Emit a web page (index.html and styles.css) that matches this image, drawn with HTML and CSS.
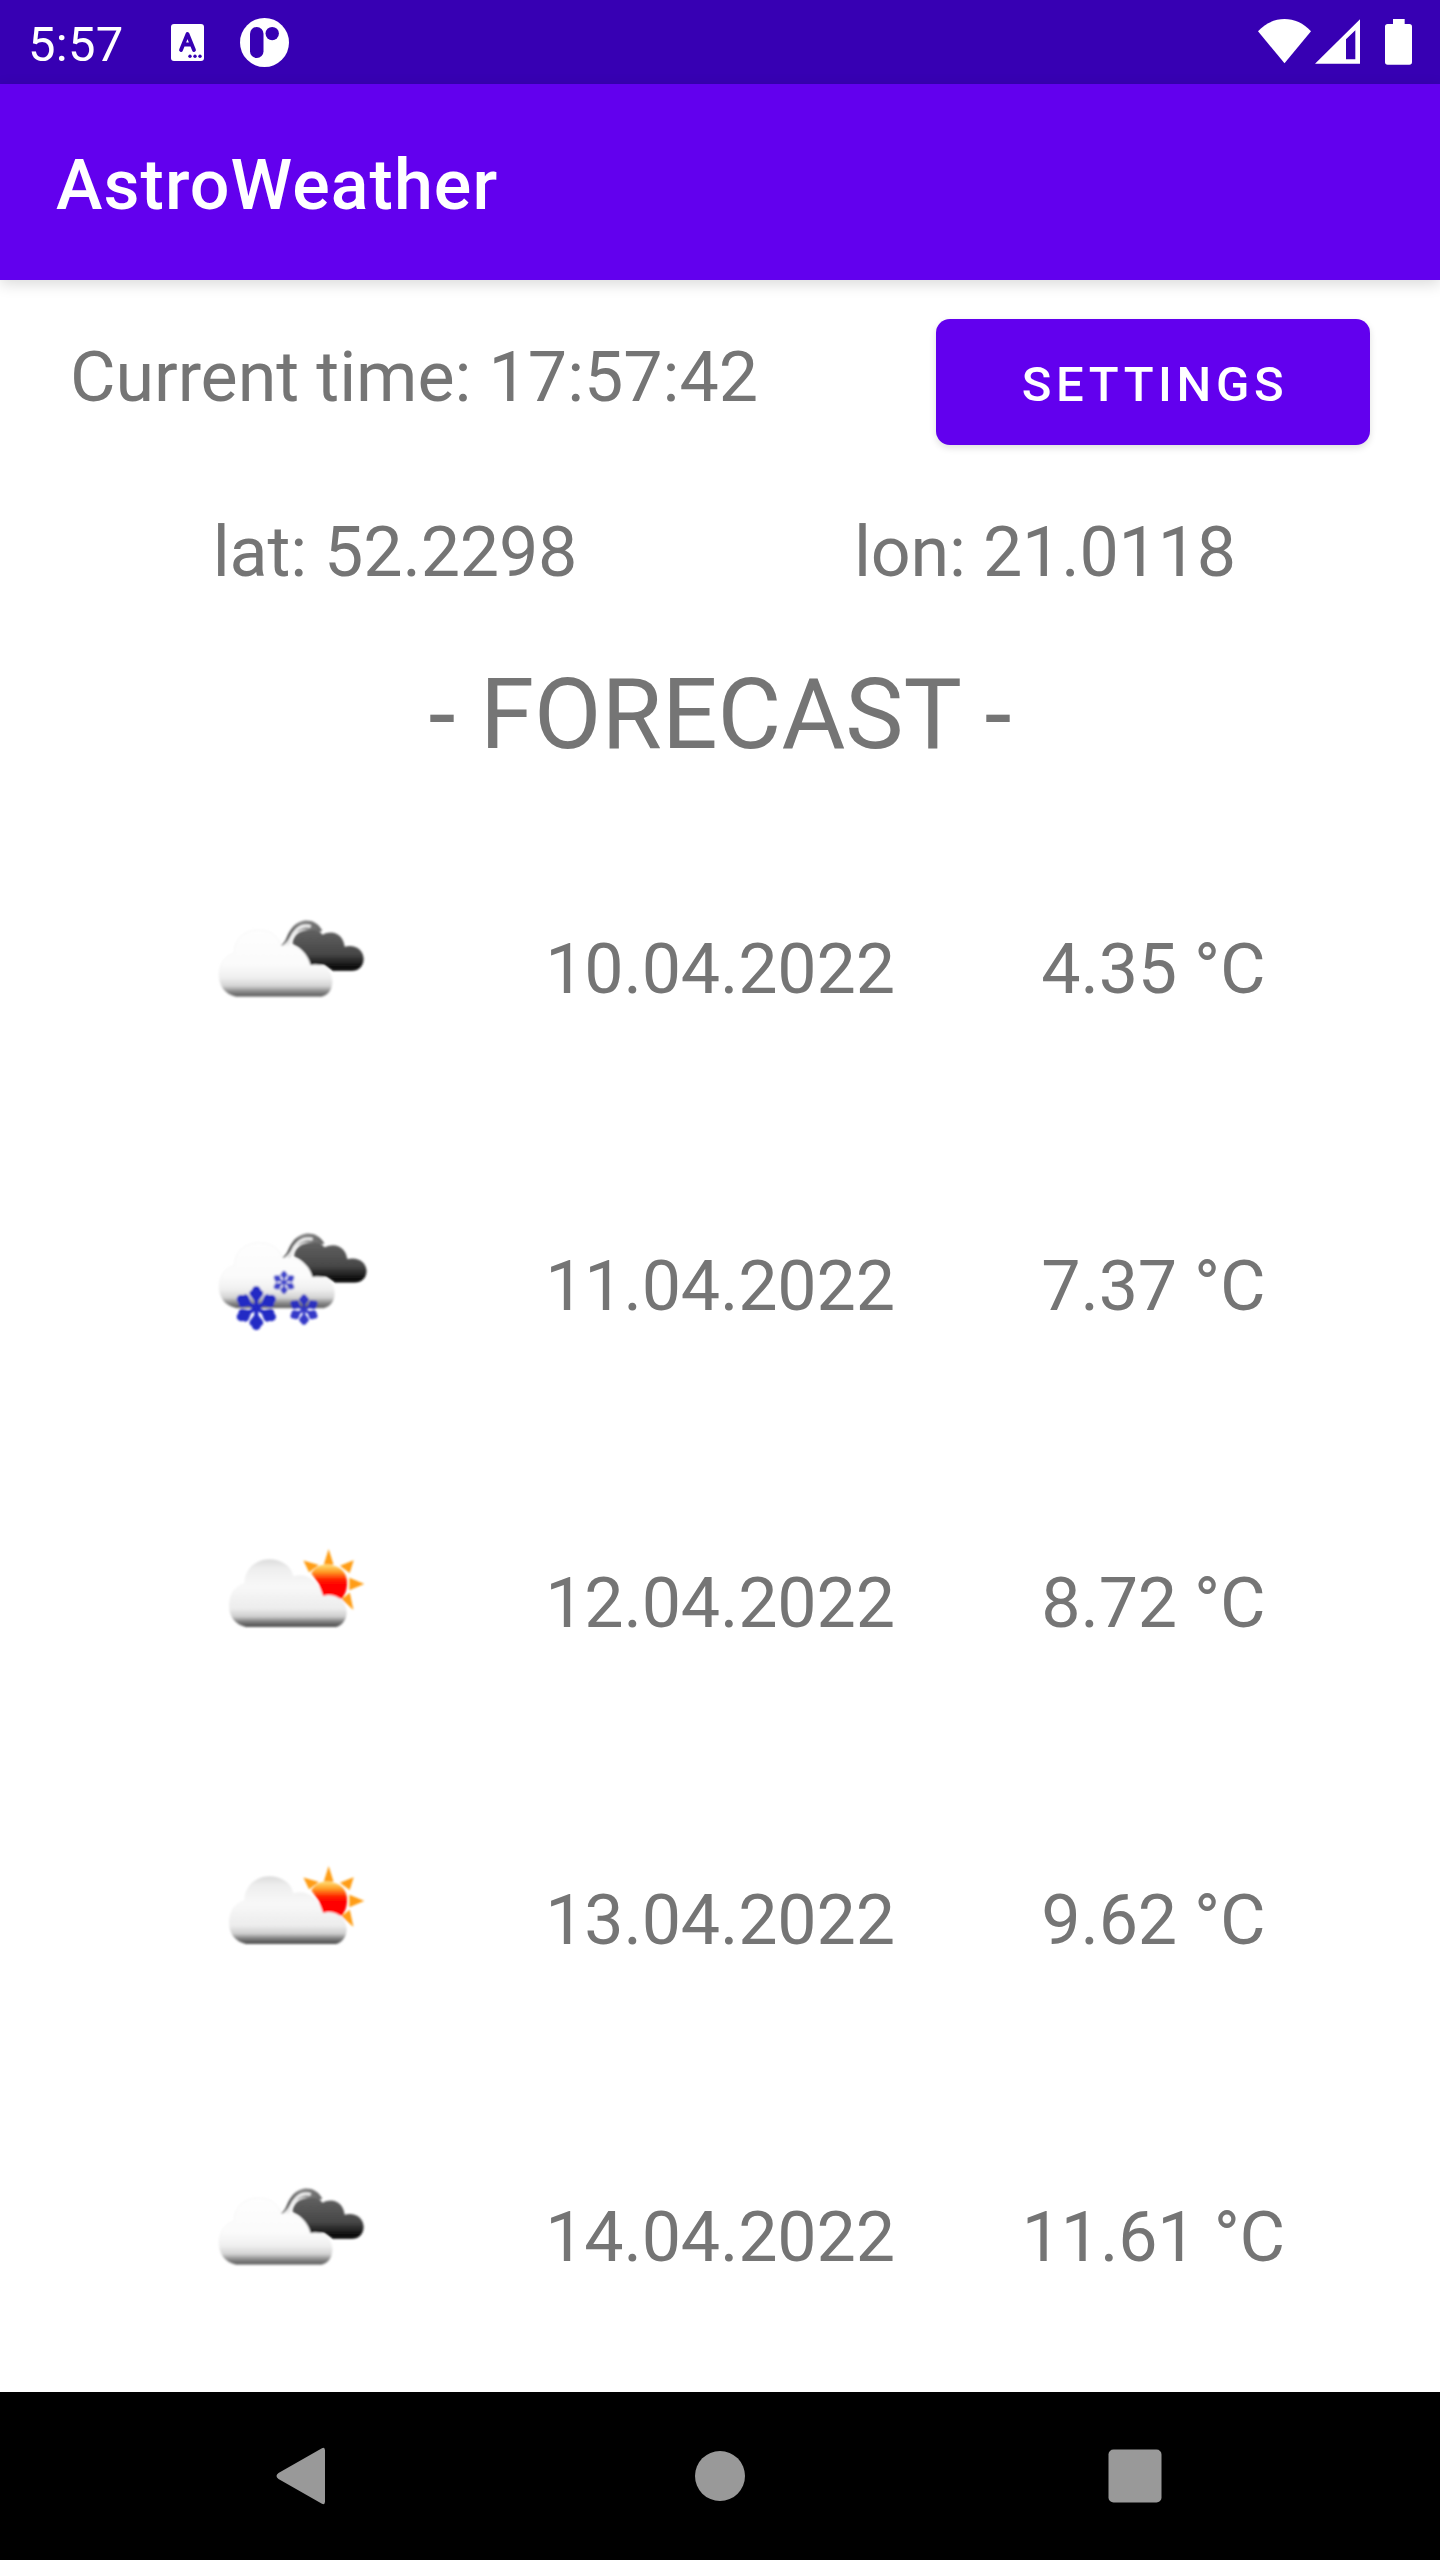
FILE: index.html
```html
<!DOCTYPE html>
<html lang="en">
<head>
<meta charset="utf-8">
<title>AstroWeather</title>
<link rel="stylesheet" href="styles.css">
</head>
<body>
<svg class="defs" aria-hidden="true">
  <defs>
    <linearGradient id="white-cloud" gradientUnits="userSpaceOnUse" x1="0" y1="90" x2="0" y2="292">
      <stop offset="0" stop-color="#fefefe"/>
      <stop offset=".5" stop-color="#fbfbfb"/>
      <stop offset=".7" stop-color="#f0f0f0"/>
      <stop offset=".83" stop-color="#d4d4d4"/>
      <stop offset=".91" stop-color="#8c8c8c"/>
      <stop offset="1" stop-color="#555"/>
    </linearGradient>
    <linearGradient id="day-cloud" gradientUnits="userSpaceOnUse" x1="0" y1="88" x2="0" y2="292">
      <stop offset="0" stop-color="#dcdcdc"/>
      <stop offset=".14" stop-color="#eee"/>
      <stop offset=".4" stop-color="#f8f8f8"/>
      <stop offset=".72" stop-color="#ededed"/>
      <stop offset=".84" stop-color="#cfcfcf"/>
      <stop offset=".91" stop-color="#858585"/>
      <stop offset="1" stop-color="#454545"/>
    </linearGradient>
    <linearGradient id="dark-cloud" gradientUnits="userSpaceOnUse" x1="0" y1="85" x2="0" y2="212">
      <stop offset="0" stop-color="#626262"/>
      <stop offset=".6" stop-color="#484848"/>
      <stop offset=".8" stop-color="#222"/>
      <stop offset="1" stop-color="#000"/>
    </linearGradient>
    <linearGradient id="arc" gradientUnits="userSpaceOnUse" x1="240" y1="0" x2="365" y2="0">
      <stop offset="0" stop-color="#333"/>
      <stop offset=".5" stop-color="#888"/>
      <stop offset="1" stop-color="#666"/>
    </linearGradient>
    <linearGradient id="sun-disc" gradientUnits="userSpaceOnUse" x1="0" y1="105" x2="0" y2="165">
      <stop offset="0" stop-color="#ffdc70"/>
      <stop offset=".35" stop-color="#ff9a20"/>
      <stop offset=".75" stop-color="#ff1a00"/>
      <stop offset="1" stop-color="#f00"/>
    </linearGradient>
    <filter id="soft" x="-10%" y="-10%" width="120%" height="120%"><feGaussianBlur stdDeviation="3.5"/></filter>
    <g id="flake" fill="#2429c4">
      <path id="arm" d="M-6 0L-6 -22L-19 -38Q-24 -50 -14 -53Q-10 -66 0 -66Q10 -66 14 -53Q24 -50 19 -38L6 -22L6 0Z"/>
      <use href="#arm" transform="rotate(60)"/>
      <use href="#arm" transform="rotate(120)"/>
      <use href="#arm" transform="rotate(180)"/>
      <use href="#arm" transform="rotate(240)"/>
      <use href="#arm" transform="rotate(300)"/>
    </g>
    <g id="clouds">
      <path d="M240 137C262 126 258 106 276 84C300 54 345 52 367 92L350 98C330 84 296 84 282 106C270 122 274 134 250 141Z" fill="url(#arc)"/>
      <path d="M252 138C274 126 271 108 287 93C299 80 312 75 332 79" fill="none" stroke="#f4f4f4" stroke-width="8"/>
      <path d="M278 128C280 106 300 92 322 90C342 87 360 92 367 104C400 87 430 104 434 140C466 132 490 150 491 176C491 198 476 212 456 212H398L372 194L330 196C322 160 300 142 278 132Z" fill="url(#dark-cloud)"/>
      <path d="M108 291C75 284 57 260 57 226C58 190 76 166 103 160C101 116 136 90 175 90C210 90 236 108 244 137C288 132 322 156 331 196C368 188 396 212 397 246C397 270 385 287 364 291Z" fill="url(#white-cloud)" stroke="#f2f2f2" stroke-width="2"/>
    </g>
    <symbol id="cloudy" viewBox="0 0 522 435">
      <g transform="translate(0 21)" filter="url(#soft)"><use href="#clouds"/></g>
    </symbol>
    <symbol id="snow" viewBox="0 0 522 435">
      <g filter="url(#soft)">
        <use href="#clouds" transform="translate(-1 10) scale(1.02 .98)"/>
        <use href="#flake" transform="translate(169 294)"/>
        <use href="#flake" transform="translate(252 217) scale(.53)" opacity=".85"/>
        <use href="#flake" transform="translate(312 299) scale(.7)" opacity=".92"/>
      </g>
    </symbol>
    <symbol id="sunny-cloud" viewBox="0 0 522 435">
      <g transform="translate(30 9)" filter="url(#soft)">
        <path d="M356 64L368 102H344ZM428 94L418 126L394 108ZM458 162L420 178V146ZM427 234L398 208L418 192ZM284 95L322 106L298 124Z" fill="#ff9c12" stroke="#ff9c12" stroke-width="4"/>
        <path d="M304 130C316 108 340 98 366 106C398 112 414 136 411 166C410 182 404 196 396 206L340 200L326 162Z" fill="url(#sun-disc)"/>
        <path d="M108 291C75 284 57 260 57 226C58 190 76 166 103 160C103 116 140 88 178 88C215 88 244 108 250 139C290 127 326 152 338 198C376 187 408 212 410 246C410 268 398 286 378 291Z" fill="url(#day-cloud)"/>
      </g>
    </symbol>
  </defs>
</svg>

<div class="screen">
  <header class="status-bar">
    <div class="status-left">
      <span class="clock">5:57</span>
      <svg class="status-icon-a" viewBox="0 0 33 37">
        <rect x="0" y="0" width="33" height="37" rx="3" fill="#fff"/>
        <path d="M10 26L16.500 10L23 26M12.500 20.500H20.500" fill="none" stroke="#3700b3" stroke-width="3.800" stroke-linecap="round" stroke-linejoin="round"/>
        <g fill="#3700b3"><circle cx="19" cy="32.300" r="1.700"/><circle cx="24" cy="32.300" r="1.700"/><circle cx="29" cy="32.300" r="1.700"/></g>
      </svg>
      <svg class="status-icon-p" viewBox="0 0 49 49">
        <circle cx="24.500" cy="24.500" r="24.500" fill="#fff"/>
        <rect x="10" y="9" width="13.500" height="31" rx="6.700" fill="#3700b3"/>
        <circle cx="32.200" cy="15.600" r="6.700" fill="#3700b3"/>
      </svg>
    </div>
    <svg class="status-right" viewBox="0 0 660 252" fill="#fff">
      <path d="M193.500 190L114 94C158 45 229 45 273 94Z"/>
      <path fill-rule="evenodd" d="M285 191L420 58V191ZM378 178H406V91L378 118Z"/>
      <path d="M519 57H554V72H568Q576 72 576 80V186Q576 194 568 194H503Q495 194 495 186V80Q495 72 503 72H519Z"/>
    </svg>
  </header>

  <div class="app-bar"><h1 class="app-title">AstroWeather</h1></div>

  <main class="content">
    <div class="top-row">
      <span class="text">Current time: 17:57:42</span>
      <button class="settings" type="button">SETTINGS</button>
    </div>
    <div class="coords">
      <span class="text">lat: 52.2298</span>
      <span class="text">lon: 21.0118</span>
    </div>
    <h2 class="forecast-title">- FORECAST -</h2>
    <div class="forecast">
      <div class="day"><svg class="weather"><use href="#cloudy"/></svg><span class="text">10.04.2022</span><span class="text">4.35 °C</span></div>
      <div class="day"><svg class="weather"><use href="#snow"/></svg><span class="text">11.04.2022</span><span class="text">7.37 °C</span></div>
      <div class="day"><svg class="weather"><use href="#sunny-cloud"/></svg><span class="text">12.04.2022</span><span class="text">8.72 °C</span></div>
      <div class="day"><svg class="weather"><use href="#sunny-cloud"/></svg><span class="text">13.04.2022</span><span class="text">9.62 °C</span></div>
      <div class="day"><svg class="weather"><use href="#cloudy"/></svg><span class="text">14.04.2022</span><span class="text">11.61 °C</span></div>
    </div>
  </main>

  <nav class="nav-bar">
    <svg class="nav-icon" viewBox="3 0 60 60"><path d="M53 4.500V55.500Q53 59.500 49.500 57.500L6.500 33Q2.500 30 6.500 27L49.500 2.500Q53 0.500 53 4.500Z"/></svg>
    <svg class="nav-icon" viewBox="0 0 60 60"><circle cx="30" cy="30" r="25"/></svg>
    <svg class="nav-icon" viewBox="0 0 60 60"><rect x="3.500" y="3.500" width="53" height="53" rx="5"/></svg>
  </nav>
</div>
</body>
</html>
```
FILE: styles.css
```css
* { box-sizing: border-box; }

body {
  margin: 0;
  background: #fff;
  font-family: Roboto, "Liberation Sans", sans-serif;
}

.defs { position: absolute; width: 0; height: 0; }

.screen {
  display: flex;
  flex-direction: column;
  width: 1440px;
  height: 2560px;
  overflow: hidden;
}

.status-bar {
  display: flex;
  justify-content: space-between;
  height: 84px;
  background: #3700b3;
  color: #fff;
}

.status-left { display: flex; align-items: center; padding-left: 28px; }
.clock { width: 143px; font-size: 49px; line-height: 57px; padding-top: 5px; letter-spacing: .3px; }
.status-icon-a { width: 33px; height: 37px; margin-right: 36px; }
.status-icon-p { width: 49px; height: 49px; }
.status-right { width: 220px; height: 84px; }

.app-bar {
  display: flex;
  align-items: center;
  height: 196px;
  padding: 6px 56px 0;
  background: #6200ee;
  color: #fff;
  box-shadow: 0 4px 14px rgba(0, 0, 0, .15);
  z-index: 1;
}

.app-title { margin: 0; font-size: 70px; font-weight: 500; line-height: 82px; letter-spacing: 1.05px; }

.content { display: flex; flex-direction: column; flex: 1; padding: 39px 70px 0; }

.text { color: #757575; font-size: 70px; line-height: 82px; letter-spacing: -.2px; white-space: nowrap; }

.top-row { display: flex; justify-content: space-between; align-items: center; height: 126px; }
.top-row .text { margin-top: -10px; letter-spacing: -.08px; }

.settings {
  width: 434px;
  height: 126px;
  padding: 5px 0 0 4px;
  border: 0;
  border-radius: 14px;
  background: #6200ee;
  color: #fff;
  font: 500 49px/57px Roboto, "Liberation Sans", sans-serif;
  letter-spacing: 4.6px;
  box-shadow: 0 3px 7px rgba(0, 0, 0, .13);
}

.coords { display: grid; grid-template-columns: 1fr 1fr; margin-top: 66px; text-align: center; }

.forecast-title {
  margin: 64px 0 0;
  color: #757575;
  font-size: 98px;
  font-weight: 400;
  line-height: 115px;
  text-align: center;
}

.forecast { display: grid; grid-template-rows: repeat(5, 317px); margin-top: 35px; }

.day {
  display: grid;
  grid-template-columns: repeat(3, 1fr);
  align-items: center;
  justify-items: center;
}
.day .text { padding-top: 7px; }

.weather { width: 174px; height: 145px; }

.nav-bar {
  display: flex;
  justify-content: space-between;
  align-items: center;
  height: 168px;
  padding: 0 275px;
  background: #000;
}

.nav-icon { width: 60px; height: 60px; fill: #999; }
```
